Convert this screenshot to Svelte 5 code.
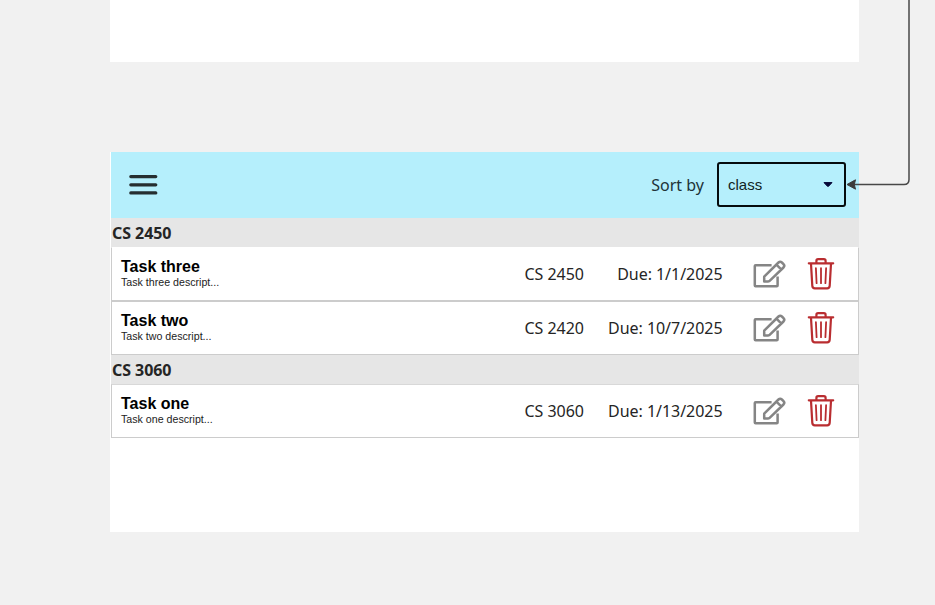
<script>
  const groups = [
    { name: 'CS 2450', tasks: [
      { title: 'Task three', text: 'Task three descript...', course: 'CS 2450', due: '1/1/2025' },
      { title: 'Task two', text: 'Task two descript...', course: 'CS 2420', due: '10/7/2025' }
    ] },
    { name: 'CS 3060', tasks: [
      { title: 'Task one', text: 'Task one descript...', course: 'CS 3060', due: '1/13/2025' }
    ] }
  ];
</script>

<div class="board">
  <div class="previous"></div>
  <main class="frame">
    <header>
      <svg class="menu" width="30" height="22" viewBox="0 0 30 22">
        <path d="M2.8 2.6H27.8M2.8 10.8H27.8M2.8 18.9H27.8" />
      </svg>
      <span class="label">Sort by</span>
      <div class="select">
        <span>class</span>
        <svg width="10" height="7" viewBox="0 0 10 7"><path d="M1 1.6H9L5.5 5.3Q5 5.8 4.5 5.3Z" fill="#050536" stroke="#050536" stroke-linejoin="round" /></svg>
      </div>
    </header>
    {#each groups as group}
      <h2>{group.name}</h2>
      {#each group.tasks as task}
        <article>
          <div class="info">
            <h3>{task.title}</h3>
            <p>{task.text}</p>
          </div>
          <span class="course">{task.course}</span>
          <span class="due">Due: {task.due}</span>
          <svg class="edit" width="34" height="32" viewBox="0 0 34 32">
            <path d="M18.6 6.2H2.6Q1.8 6.2 1.8 7V26.4Q1.8 27.2 2.6 27.2H23.8Q24.6 27.2 24.6 26.4V17.4" />
            <path d="M11.2 22.6V17.7L25.5 3.5Q27.2 1.9 28.9 3.5L30.5 5.1Q32.1 6.8 30.5 8.5L16.6 21.8Q15.8 22.6 14.8 22.6ZM23.4 5.7L28.4 10.7" />
          </svg>
          <svg class="trash" width="28" height="34" viewBox="0 0 28 34">
            <path d="M1.8 6.3H26.2M9.4 6V3.9Q9.4 2.2 11.1 2.2H16.9Q18.6 2.2 18.6 3.9V6M4 6.8L5.3 28.9Q5.5 31.3 7.8 31.3H20.2Q22.5 31.3 22.7 28.9L24 6.8" />
            <path class="thin" d="M8.9 11.2L9.6 26.2M14 11.2V26.2M19.1 11.2L18.4 26.2" />
          </svg>
        </article>
      {/each}
    {/each}
  </main>
  <svg class="connector" width="70" height="195" viewBox="0 0 70 195">
    <path d="M64 0V179.5Q64 184.5 59 184.5H9" fill="none" stroke="#484848" stroke-width="1.5" />
    <path d="M2 184.5L10.5 179.8L9.3 184.5L10.5 189.2Z" fill="#3c3c3c" stroke="#3c3c3c" stroke-linejoin="round" />
  </svg>
</div>

<style>
  :global(body) { margin: 0; background: #f1f1f1; }
  .board { position: relative; height: 605px; overflow: hidden; background: #f1f1f1; font-family: "Noto Sans", sans-serif; font-size: 16px; color: #252525; }
  .previous { width: 749px; height: 62px; margin-left: 110px; background: #fff; }
  .frame { width: 749px; height: 380px; margin: 90px 0 0 110px; background: #fff; }
  header { box-sizing: border-box; height: 66px; margin-left: 1px; padding: 0 13px 0 17px; display: flex; align-items: center; background: #b5effc; }
  .menu { fill: none; stroke: #252e30; stroke-width: 3.2; stroke-linecap: round; }
  .label { margin-left: auto; margin-right: 13px; line-height: 22px; color: #203338; }
  .select { box-sizing: border-box; width: 129px; height: 45px; margin-top: -1px; padding: 0 11px 0 9px; border: 2px solid #050b0d; border-radius: 3px; display: flex; align-items: center; justify-content: space-between; font-family: "Liberation Sans", sans-serif; font-size: 15px; color: #101f23; }
  h2 { box-sizing: border-box; height: 29px; margin: 0 0 0 1px; padding: 0 1px; background: #e6e6e6; font-size: 16px; line-height: 30px; font-weight: 700; letter-spacing: -0.06px; }
  article { box-sizing: border-box; height: 54px; margin-left: 1px; padding: 0 23px 0 9px; border: 1px solid #ccc; display: flex; align-items: center; }
  h2 + article { border-top-color: #d8d8d8; }
  h2:first-of-type + article { border-top-color: #fff; }
  .info { flex: 1; padding-bottom: 2px; font-family: "Liberation Sans", sans-serif; color: #000; }
  h3 { margin: 0; font-size: 16px; line-height: 18px; }
  p { margin: 0; font-size: 10.65px; line-height: 12px; color: #222; }
  .course, .due { margin-top: -1px; letter-spacing: -0.04px; white-space: nowrap; }
  .course { width: 60px; }
  .due { width: 138px; text-align: right; }
  .edit { margin-left: 30.5px; margin-top: 1px; fill: none; stroke: #858585; stroke-width: 2.5; stroke-linejoin: round; }
  .trash { margin-left: 20px; fill: none; stroke: #b92d30; stroke-width: 2.2; stroke-linecap: round; stroke-linejoin: round; }
  .thin { stroke-width: 1.8; }
  .connector { position: absolute; left: 845px; top: 0; }
</style>
